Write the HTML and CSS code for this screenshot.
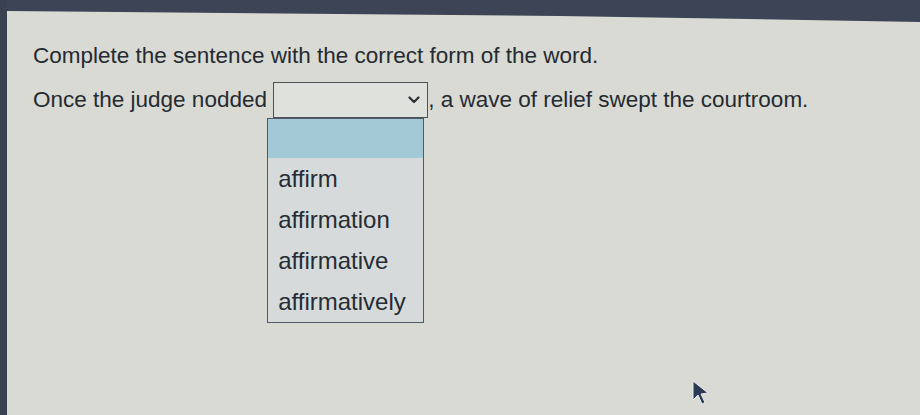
FILE: index.html
```html
<!DOCTYPE html>
<html>
<head>
<meta charset="utf-8">
<link rel="stylesheet" href="styles.css">
</head>
<body>
<div class="bezel"></div>
<div class="screen">
  <p class="title">Complete the sentence with the correct form of the word.</p>
  <p class="sentence">Once the judge nodded <span class="select-wrap"><span class="select"><svg class="chev" viewBox="0 0 12 8" width="12" height="8"><path d="M1.5 1.5 L6 6 L10.5 1.5" fill="none" stroke="#2a3038" stroke-width="2.2" stroke-linecap="round" stroke-linejoin="round"/></svg></span><span class="menu"><span class="opt hi"></span><span class="opt">affirm</span><span class="opt">affirmation</span><span class="opt">affirmative</span><span class="opt">affirmatively</span></span></span>, a wave of relief swept the courtroom.</p>
</div>
<svg class="cursor" viewBox="0 0 20 26" width="20" height="26"><path d="M2 1 L2 20 L7 15 L11 24 L14 22.5 L10 14 L17 13 Z" fill="#2a3a55" stroke="#e8ecef" stroke-width="1"/></svg>
</body>
</html>
```
FILE: styles.css
```css
html, body {
  margin: 0;
  padding: 0;
  width: 920px;
  height: 415px;
  overflow: hidden;
  background: #d9dad4;
  font-family: "Liberation Sans", Arial, sans-serif;
  color: #252a31;
}
body {
  position: relative;
  border-left: 7px solid #3a4150;
  box-sizing: border-box;
}
.bezel {
  position: absolute;
  left: 0;
  top: 0;
  width: 920px;
  height: 24px;
  background: #3c4455;
  clip-path: polygon(0 0, 100% 0, 100% 22px, 60% 16px, 0 11px);
}
.screen {
  padding: 42px 0 0 26px;
}
.title {
  margin: 0;
  font-size: 22.5px;
  line-height: 28px;
}
.sentence {
  margin: 12px 0 0;
  font-size: 22.5px;
  line-height: 36px;
}
.select-wrap {
  position: relative;
  display: inline-block;
  vertical-align: top;
}
.select {
  display: flex;
  align-items: center;
  justify-content: flex-end;
  box-sizing: border-box;
  width: 155px;
  height: 36px;
  border: 1.5px solid #4c525a;
  background: #dfe1dc;
  padding-right: 7px;
}
.menu {
  position: absolute;
  left: -6px;
  top: 36px;
  width: 157px;
  box-sizing: border-box;
  border: 1.5px solid #4e5a66;
  background: #d6dadb;
  display: flex;
  flex-direction: column;
  z-index: 2;
}
.opt {
  display: block;
  height: 41px;
  line-height: 41px;
  padding-left: 10px;
  font-size: 24px;
  color: #262c33;
}
.opt.hi {
  height: 39px;
  background: #a3c8d6;
}
.cursor {
  position: absolute;
  left: 684px;
  top: 380px;
}
```
